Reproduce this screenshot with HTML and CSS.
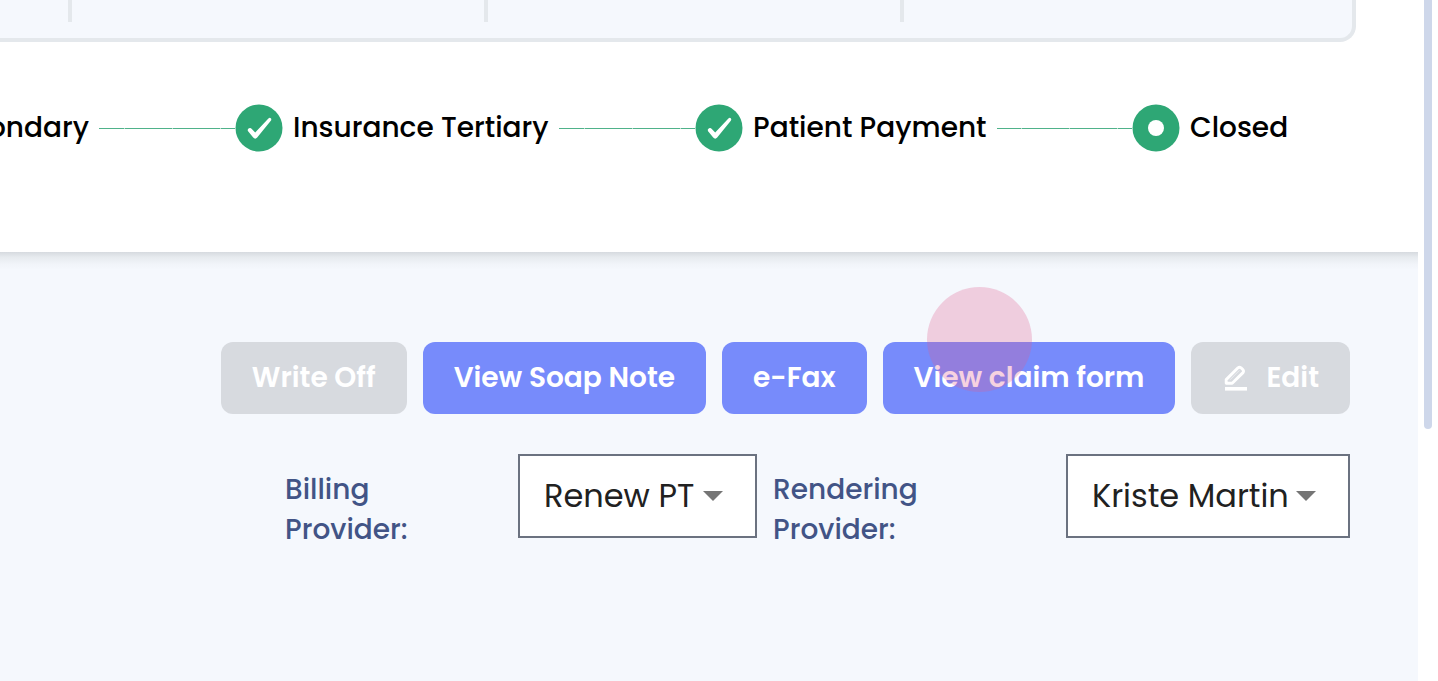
FILE: index.html
```html
<!DOCTYPE html>
<html lang="en">
  <head>
    <meta charset="UTF-8" />
    <meta name="viewport" content="width=device-width, initial-scale=1.0" />
    <title>Claim details</title>
    <link rel="stylesheet" href="styles.css">
  </head>
  <body>
    <div class="page">
      <header class="claim-header">
        <div class="summary">
          <div class="summary-cell"></div>
          <div class="summary-cell"></div>
          <div class="summary-cell"></div>
          <div class="summary-cell"></div>
        </div>

        <ol class="stepper">
          <li class="step step-cut">
            <span class="step-label">Secondary</span>
            <span class="step-line"></span>
          </li>
          <li class="step">
            <svg class="step-icon" viewBox="0 0 48 48" aria-hidden="true">
              <circle cx="24" cy="24" r="23.5" fill="#2ea775" />
              <path d="M14 24.3 Q15.6 23.5 16.8 25 L20.2 28.4 L33.4 14.4 Q34.8 13.2 35.8 14.2 Q36.8 15.4 35.8 16.8 L22.2 33.6 Q20.2 35.8 18.2 33.6 L12.9 27 Q12.2 25.2 14 24.3 Z" fill="#fff" />
            </svg>
            <span class="step-label">Insurance Tertiary</span>
            <span class="step-line"></span>
          </li>
          <li class="step">
            <svg class="step-icon" viewBox="0 0 48 48" aria-hidden="true">
              <circle cx="24" cy="24" r="23.5" fill="#2ea775" />
              <path d="M14 24.3 Q15.6 23.5 16.8 25 L20.2 28.4 L33.4 14.4 Q34.8 13.2 35.8 14.2 Q36.8 15.4 35.8 16.8 L22.2 33.6 Q20.2 35.8 18.2 33.6 L12.9 27 Q12.2 25.2 14 24.3 Z" fill="#fff" />
            </svg>
            <span class="step-label">Patient Payment</span>
            <span class="step-line"></span>
          </li>
          <li class="step">
            <svg class="step-icon" viewBox="0 0 48 48" aria-hidden="true">
              <circle cx="24" cy="24" r="23.5" fill="#2ea775" />
              <circle cx="24" cy="24" r="8" fill="#fff" />
            </svg>
            <span class="step-label">Closed</span>
          </li>
        </ol>
      </header>

      <main>
        <div class="actions">
          <button type="button" class="btn" disabled>Write Off</button>
          <button type="button" class="btn">View Soap Note</button>
          <button type="button" class="btn">e-Fax</button>
          <div class="claim-form">
            <button type="button" class="btn">View claim form</button>
            <span class="click-mark"></span>
          </div>
          <button type="button" class="btn btn-edit" disabled>
            <svg class="edit-icon" viewBox="0 0 24 26" aria-hidden="true">
              <path d="M2.2 18.2 V14.6 L14 2.8 Q15.5 1.6 17 2.8 L19 4.8 Q20 6.2 19 7.6 L8.2 18.2 Z" fill="none" stroke="#fff" stroke-width="2.9" stroke-linejoin="round" />
              <path d="M6 14.8 L15.4 5.4" stroke="#fff" stroke-width="1" opacity="0.5" />
              <rect x="1" y="22" width="22" height="3.6" fill="#fff" />
            </svg>
            Edit
          </button>
        </div>

        <form class="providers">
          <label for="billing">Billing Provider:</label>
          <div class="select-box">
            <select id="billing">
              <option>Renew PT</option>
            </select>
            <svg class="arrow" viewBox="0 0 20 10" aria-hidden="true"><path d="M0 0 H20 L10 10 Z" fill="#757575" /></svg>
          </div>
          <label for="rendering">Rendering Provider:</label>
          <div class="select-box">
            <select id="rendering">
              <option>Kriste Martin</option>
            </select>
            <svg class="arrow" viewBox="0 0 20 10" aria-hidden="true"><path d="M0 0 H20 L10 10 Z" fill="#757575" /></svg>
          </div>
        </form>
      </main>
    </div>
    <div class="scroll-track">
      <div class="scroll-thumb"></div>
    </div>
  </body>
</html>
```
FILE: styles.css
```css
* {
  box-sizing: border-box;
  margin: 0;
  padding: 0;
}

body {
  font-family: Poppins, Inter, sans-serif;
  font-size: 28px;
  background-color: #fff;
  color: #000;
  display: flex;
  min-height: 100vh;
}

.page {
  flex: 1;
  min-width: 0;
  overflow: hidden;
  background-color: #f5f8fd;
}

/* Header */
.claim-header {
  background-color: #fff;
  padding: 0 62px 100px 0;
}

.summary {
  display: grid;
  grid-template-columns: 72fr 416fr 416fr 448fr;
  background-color: #f5f8fd;
  border: 4px solid #e4e8ec;
  border-top: none;
  border-left: none;
  border-bottom-right-radius: 16px;
  padding-bottom: 16px;
}

.summary-cell {
  height: 22px;
  border-right: 4px solid #e4e8ec;
}

.summary-cell:last-child {
  border-right: none;
}

/* Stepper */
.stepper {
  display: grid;
  grid-template-columns: 235fr 460fr 437fr 156fr;
  list-style: none;
  padding-top: 62px;
  margin-right: 68px;
}

.step {
  display: flex;
  align-items: center;
  gap: 10px;
  min-width: 0;
  font-weight: 500;
  white-space: nowrap;
}

.step-icon {
  width: 48px;
  height: 48px;
  flex-shrink: 0;
}

.step-line {
  flex: 1;
  height: 1px;
  background-image: repeating-linear-gradient(to left, #4fb28a 0 14px, #b5dfcd 14px 15px, #4fb28a 15px 48px);
}

.step-cut {
  justify-content: flex-end;
  overflow: hidden;
}

.step-cut .step-line {
  flex: 0 0 136px;
}

/* Buttons */
main {
  padding: 90px 68px 0;
  background-image: linear-gradient(#d6dadf, #e6eaee 5px, #f1f4f9 12px, #f5f8fd 18px);
}

.actions {
  display: flex;
  justify-content: flex-end;
  gap: 16px;
}

.btn {
  height: 72px;
  padding: 0 31px;
  border: none;
  border-radius: 12px;
  background-color: #778bfb;
  color: #fff;
  font-family: inherit;
  font-size: 28px;
  font-weight: 600;
  white-space: nowrap;
  cursor: pointer;
}

.btn:disabled {
  background-color: #d7dadf;
  cursor: default;
}

.btn-edit {
  display: flex;
  align-items: center;
  gap: 18px;
  padding: 0 31px 0 33px;
}

.edit-icon {
  width: 24px;
  height: 26px;
}

.claim-form {
  position: relative;
}

.click-mark {
  position: absolute;
  left: 44px;
  top: -55px;
  width: 105px;
  height: 105px;
  border-radius: 50%;
  background-color: rgba(223, 93, 142, 0.28);
  pointer-events: none;
}

/* Providers */
.providers {
  display: grid;
  grid-template-columns: 217px 239px 277px 284px;
  justify-content: end;
  column-gap: 16px;
  margin-top: 40px;
}

.providers label {
  padding: 16px 70px 0 0;
  color: #425486;
  font-weight: 500;
  line-height: 40px;
}

.select-box {
  display: grid;
  align-items: center;
  height: 84px;
}

.select-box select,
.select-box .arrow {
  grid-area: 1 / 1;
}

.select-box select {
  appearance: none;
  width: 100%;
  height: 84px;
  padding: 0 24px 2px;
  border: 2px solid #6b7280;
  border-radius: 0;
  background-color: #fff;
  color: #212121;
  font-family: inherit;
  font-size: 32px;
}

.arrow {
  justify-self: end;
  width: 20px;
  height: 10px;
  margin-right: 34px;
  pointer-events: none;
}

/* Scrollbar */
.scroll-track {
  width: 20px;
  height: 100vh;
  padding: 0 6px;
}

.scroll-thumb {
  width: 8px;
  height: 63%;
  border-radius: 0 0 4px 4px;
  background-color: #ced7ea;
}
```
